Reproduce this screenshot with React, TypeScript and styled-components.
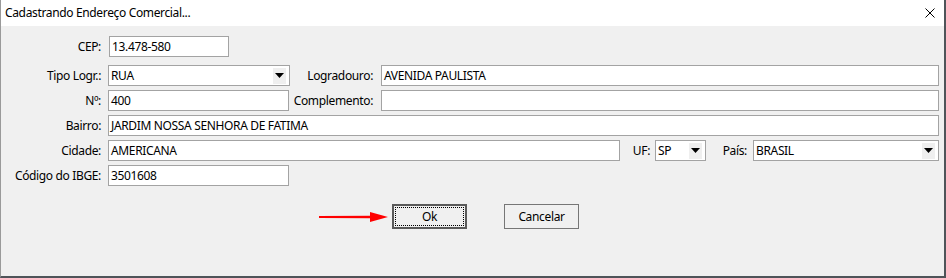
import React from "react";
import styled, { createGlobalStyle } from "styled-components";

const Global = createGlobalStyle`
  html, body { margin: 0; padding: 0; background: #f0f0f0; }
  * { box-sizing: border-box; }
`;

const UI_FONT = `"Noto Sans", "Open Sans", sans-serif`;

const Window = styled.div`
  width: 946px;
  height: 278px;
  display: flex;
  flex-direction: column;
  background: #f0f0f0;
  border-left: 1px solid #9a9a9a;
  border-right: 2px solid #4f5459;
  border-bottom: 2px solid #4f5459;
  font-family: ${UI_FONT};
  font-size: 12px;
  letter-spacing: -0.35px;
  color: #000;
  overflow: hidden;
`;

const TitleBar = styled.div`
  height: 26px;
  flex: none;
  background: #fff;
  display: flex;
  align-items: center;
  justify-content: space-between;
  padding-left: 4px;
  padding-right: 9px;
`;

const Title = styled.span`
  font-size: 12px;
  line-height: 26px;
  white-space: nowrap;
`;

const CloseIcon = styled.svg`
  width: 10px;
  height: 10px;
  display: block;
`;

const Form = styled.div`
  display: flex;
  flex-direction: column;
  gap: 4px;
  padding: 10px 5px 0 0;
`;

const Row = styled.div<{ $extra?: number }>`
  display: flex;
  align-items: center;
  height: 21px;
  margin-bottom: ${(p) => p.$extra ?? 0}px;
`;

const Label = styled.label<{ $w: number; $pr?: number }>`
  flex: none;
  width: ${(p) => p.$w}px;
  padding-right: ${(p) => p.$pr ?? 7}px;
  text-align: right;
  white-space: nowrap;
  line-height: 21px;
`;

const Field = styled.div<{ $w?: number }>`
  flex: ${(p) => (p.$w ? "none" : "1 1 auto")};
  width: ${(p) => (p.$w ? `${p.$w}px` : "auto")};
  height: 21px;
  background: #fff;
  border: 1px solid #a3a3a3;
  display: flex;
  align-items: center;
  padding: 0 3px 0 2px;
  white-space: nowrap;
  overflow: hidden;
`;

const Value = styled.span`
  flex: 1 1 auto;
  line-height: 19px;
`;

const ArrowBox = styled.span`
  flex: none;
  width: 13px;
  height: 16px;
  background: #efefef;
  display: flex;
  align-items: center;
  justify-content: center;
`;

const Tri = styled.svg`
  width: 9px;
  height: 5px;
  display: block;
`;

const ButtonBar = styled.div`
  display: flex;
  align-items: center;
  padding-left: 317px;
  margin-top: 18px;
  height: 25px;
`;

const Pointer = styled.svg`
  width: 70px;
  height: 12px;
  flex: none;
  margin-right: 4px;
  margin-top: 1px;
`;

const Button = styled.button<{ $default?: boolean }>`
  width: 75px;
  height: 25px;
  flex: none;
  margin-right: 37px;
  font-family: ${UI_FONT};
  font-size: 12px;
  letter-spacing: -0.35px;
  color: #000;
  background: #f0f0f0;
  border: ${(p) => (p.$default ? "2px solid #5a5a5a" : "1px solid #767676")};
  padding: ${(p) => (p.$default ? "1px" : "2px")};
  display: flex;
  cursor: default;
`;

const Focus = styled.span<{ $dotted?: boolean }>`
  flex: 1;
  display: flex;
  align-items: center;
  justify-content: center;
  border: 1px ${(p) => (p.$dotted ? "dotted #000" : "solid transparent")};
`;

function Select({ value, w }: { value: string; w?: number }) {
  return (
    <Field $w={w}>
      <Value>{value}</Value>
      <ArrowBox>
        <Tri viewBox="0 0 9 5">
          <polygon points="0,0 9,0 4.5,5" fill="#000" />
        </Tri>
      </ArrowBox>
    </Field>
  );
}

function Input({ value, w }: { value: string; w?: number }) {
  return (
    <Field $w={w}>
      <Value>{value}</Value>
    </Field>
  );
}

export default function App() {
  return (
    <>
      <Global />
      <Window>
        <TitleBar>
          <Title>Cadastrando Endereço Comercial...</Title>
          <CloseIcon viewBox="0 0 10 10">
            <path d="M0.5 0.5 L9.5 9.5 M9.5 0.5 L0.5 9.5" stroke="#000" strokeWidth="1" fill="none" />
          </CloseIcon>
        </TitleBar>
        <Form>
          <Row $extra={4}>
            <Label $w={108} $pr={8}>CEP:</Label>
            <Input w={120} value="13.478-580" />
          </Row>
          <Row>
            <Label $w={107}>Tipo Logr.:</Label>
            <Select w={182} value="RUA" />
            <Label $w={91} $pr={8}>Logradouro:</Label>
            <Input value="AVENIDA PAULISTA" />
          </Row>
          <Row>
            <Label $w={107}>Nº:</Label>
            <Input w={181} value="400" />
            <Label $w={92} $pr={8}>Complemento:</Label>
            <Input value="" />
          </Row>
          <Row>
            <Label $w={107}>Bairro:</Label>
            <Input value="JARDIM NOSSA SENHORA DE FATIMA" />
          </Row>
          <Row>
            <Label $w={107}>Cidade:</Label>
            <Input w={512} value="AMERICANA" />
            <Label $w={35} $pr={5}>UF:</Label>
            <Select w={51} value="SP" />
            <Label $w={47} $pr={6}>País:</Label>
            <Select value="BRASIL" />
          </Row>
          <Row>
            <Label $w={107}>Código do IBGE:</Label>
            <Input w={181} value="3501608" />
          </Row>
        </Form>
        <ButtonBar>
          <Pointer viewBox="0 0 70 12">
            <path d="M1 5 L54 4.8 L54 7.2 L1 7 Z" fill="#f00" />
            <polygon points="52,1 70,6 52,11" fill="#f00" />
          </Pointer>
          <Button $default>
            <Focus $dotted>Ok</Focus>
          </Button>
          <Button>
            <Focus>Cancelar</Focus>
          </Button>
        </ButtonBar>
      </Window>
    </>
  );
}
